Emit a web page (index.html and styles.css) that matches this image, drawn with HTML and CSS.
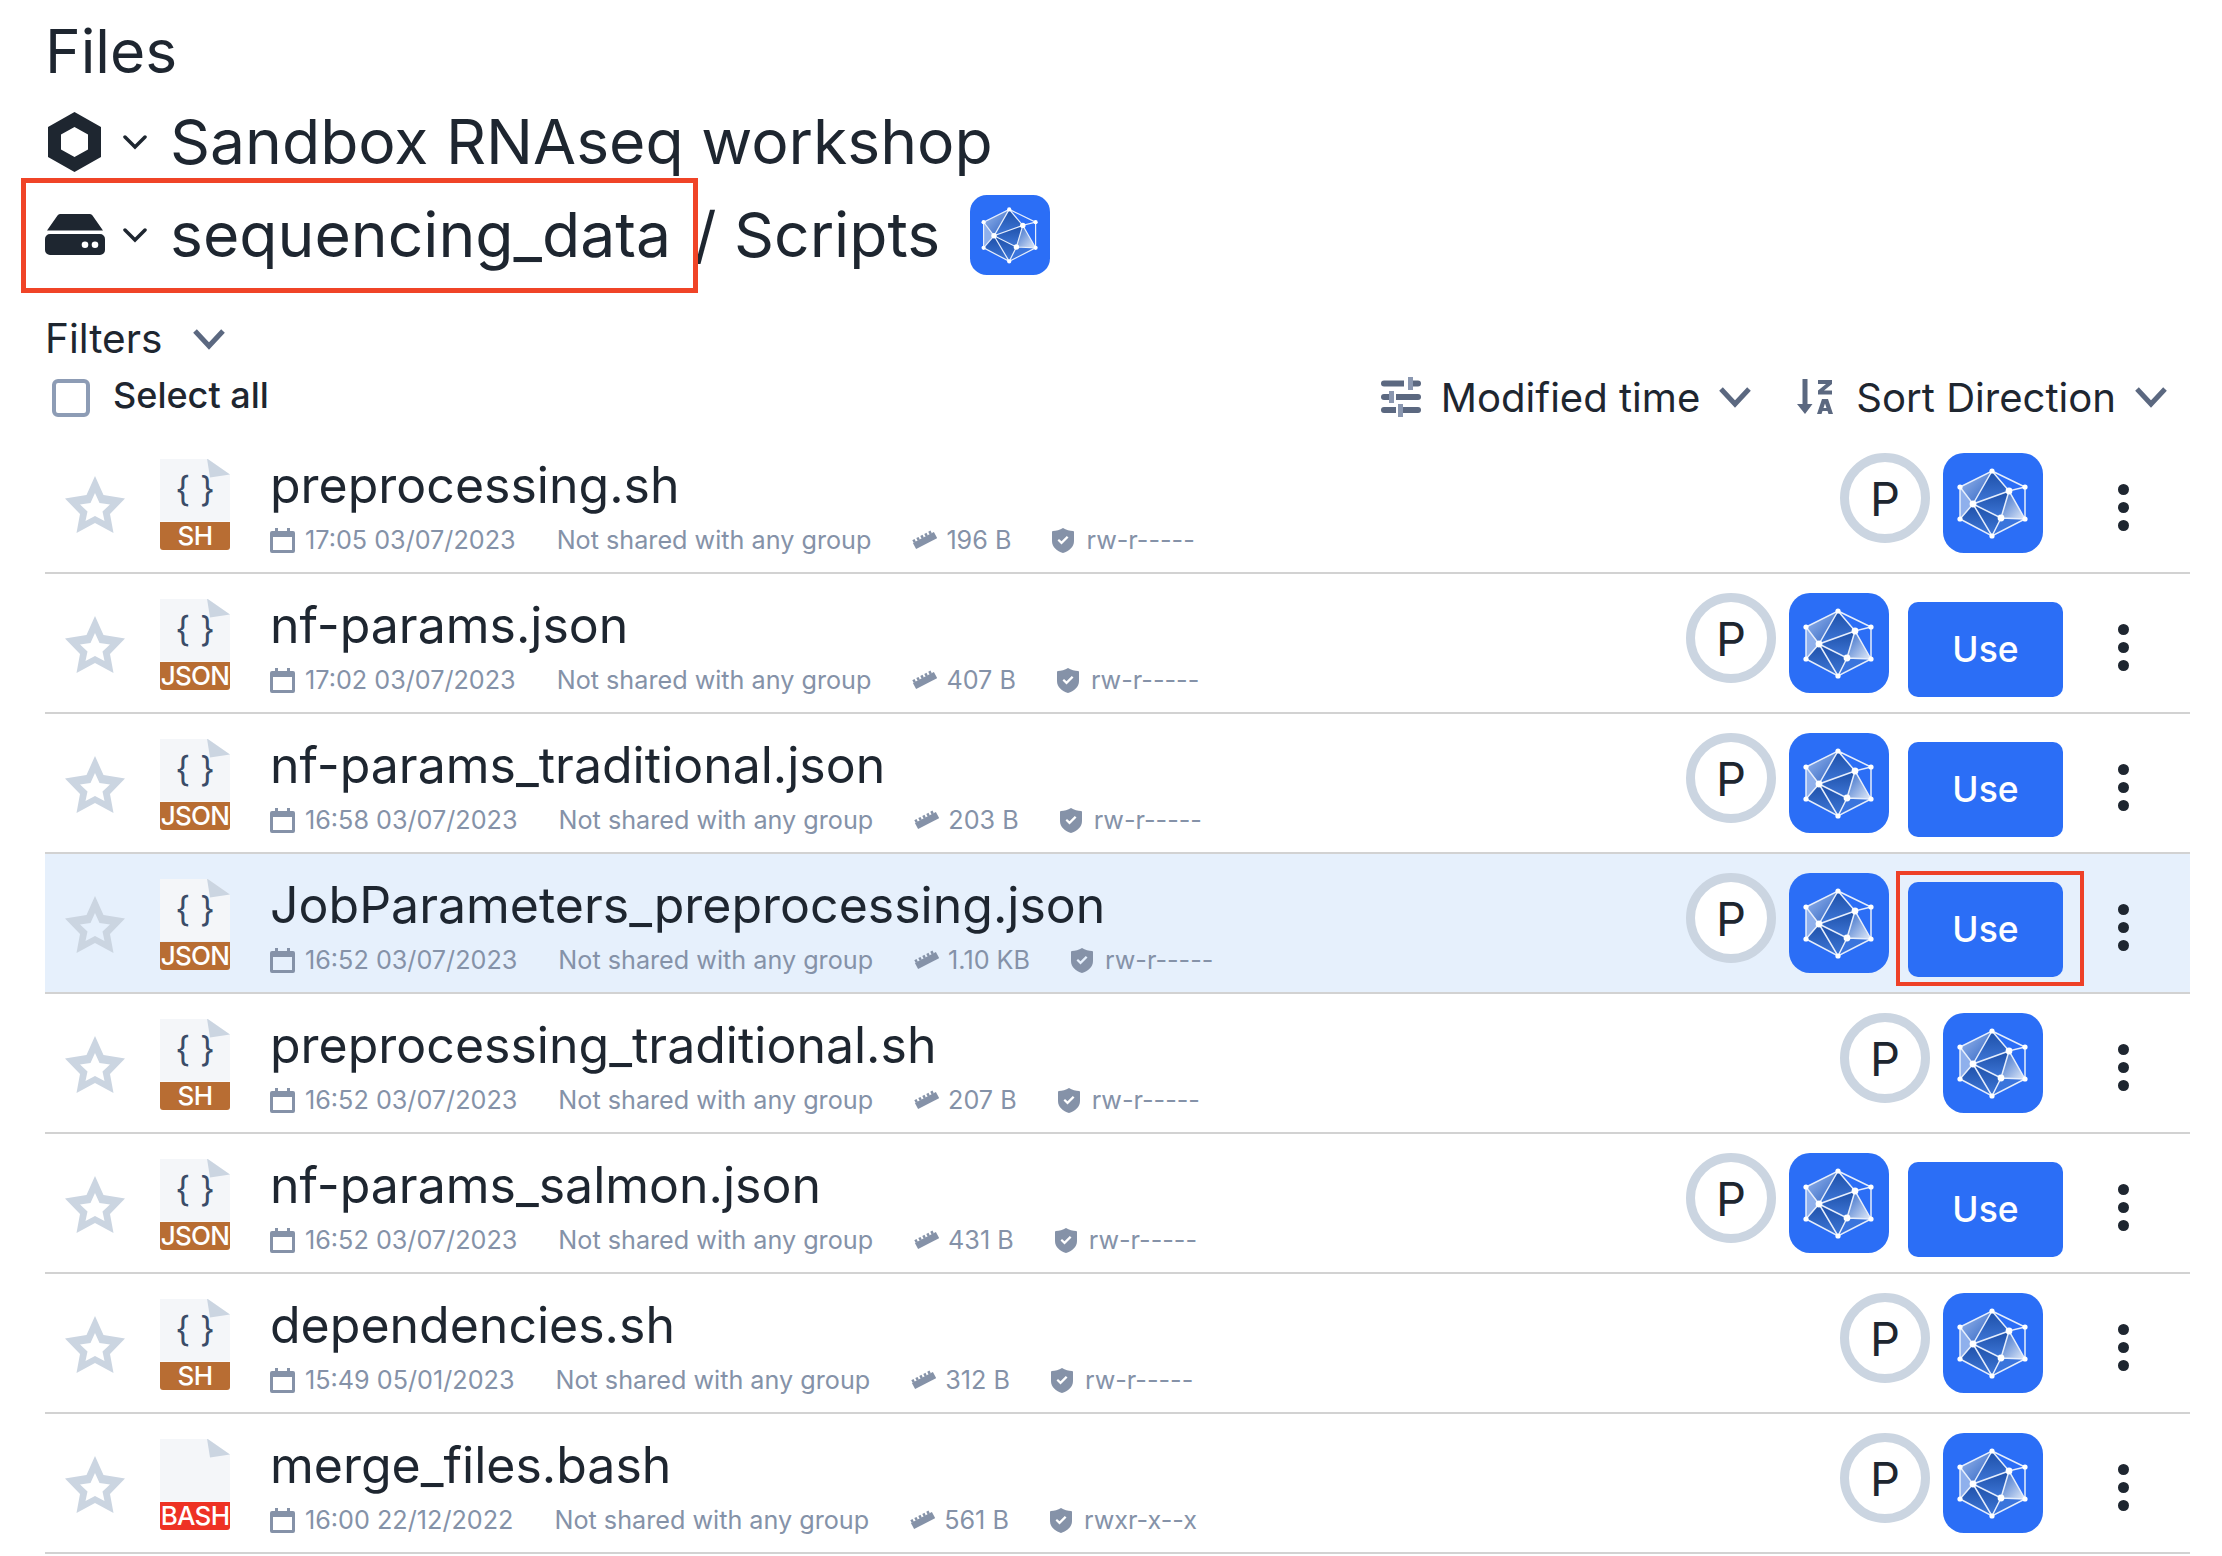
FILE: index.html

```html
<!DOCTYPE html>
<html lang="en">
<head>
    <meta charset="UTF-8">
    <title>Files</title>
    <link rel="stylesheet" href="styles.css">
</head>
<body>
    <svg class="sprite" xmlns="http://www.w3.org/2000/svg">
        <defs>
            <linearGradient id="facetA" x1="0" y1="0" x2="1" y2="1">
                <stop offset="0" stop-color="#9fbdf0"/>
                <stop offset="1" stop-color="#2a5fc0"/>
            </linearGradient>
            <linearGradient id="facetB" x1="0" y1="0" x2="0" y2="1">
                <stop offset="0" stop-color="#1d4fa8"/>
                <stop offset="1" stop-color="#3f78d8"/>
            </linearGradient>
            <linearGradient id="facetC" x1="0" y1="0" x2="1" y2="1">
                <stop offset="0" stop-color="#2a62c4"/>
                <stop offset="1" stop-color="#e4edfb"/>
            </linearGradient>
            <symbol id="tile" viewBox="0 0 100 100">
                <rect width="100" height="100" rx="21" fill="#2b6ef6"/>
                <path d="M49 18L17 34L30 51Z" fill="url(#facetA)"/>
                <path d="M17 34L30 51L17 66Z" fill="#8fb0ec"/>
                <path d="M49 18L66 38L30 51Z" fill="url(#facetB)"/>
                <path d="M30 51L66 38L58 65Z" fill="url(#facetB)"/>
                <path d="M66 38L82 66L58 65Z" fill="url(#facetC)"/>
                <path d="M30 51L58 65L49 83L17 66Z" fill="url(#facetB)"/>
                <path d="M58 65L82 66L49 83Z" fill="#3a74dc"/>
                <path d="M49 18L82 34V66L49 83L17 66V34ZM49 18L30 51L17 34M49 18L66 38L82 34M66 38L30 51L17 66M30 51L58 65L82 66M30 51L49 83L58 65L66 38L82 66" fill="none" stroke="#e6eefc" stroke-width="1.500"/>
                <g fill="#fff">
                    <circle cx="49" cy="18" r="2.600"/>
                    <circle cx="82" cy="34" r="2.600"/>
                    <circle cx="82" cy="66" r="2.600"/>
                    <circle cx="49" cy="83" r="2.600"/>
                    <circle cx="17" cy="66" r="2.600"/>
                    <circle cx="17" cy="34" r="2.600"/>
                    <circle cx="30" cy="51" r="3.400"/>
                    <circle cx="66" cy="38" r="3.400"/>
                    <circle cx="58" cy="65" r="3.400"/>
                </g>
            </symbol>
            <symbol id="star" viewBox="0 0 60 57">
                <path fill-rule="evenodd" fill="#cbd5e1" d="M30 0L38.500 19L60 22.500L45 38L48.500 57L30 47L11.500 57L15 38L0 22.500L21.500 19ZM30 17L25.500 27L15 28.500L22.500 35.500L20.500 45L30 40L39.500 45L37.500 35.500L45 28.500L34.500 27Z"/>
            </symbol>
            <symbol id="calendar" viewBox="0 0 25 25">
                <path fill-rule="evenodd" fill="currentColor" d="M2 3H5V0H8V3H17V0H20V3H23A2 2 0 0 1 25 5V23A2 2 0 0 1 23 25H2A2 2 0 0 1 0 23V5A2 2 0 0 1 2 3ZM3 9V22H22V9Z"/>
            </symbol>
            <symbol id="ruler" viewBox="0 0 25 20">
                <path d="M2.500 16L23.500 5" fill="none" stroke="currentColor" stroke-width="7"/>
                <path d="M1 11.500L20 1.500" fill="none" stroke="currentColor" stroke-width="3" stroke-dasharray="2.500 2"/>
            </symbol>
            <symbol id="shield" viewBox="0 0 22 25">
                <path fill="currentColor" fill-rule="evenodd" d="M11 0C14 2 18 3 21 3A1 1 0 0 1 22 4V13C22 19 17 23 11 25C5 23 0 19 0 13V4A1 1 0 0 1 1 3C4 3 8 2 11 0ZM5.500 12.500L9.500 16.500L16.500 9.500L14.800 8L9.500 13.300L7 11Z"/>
            </symbol>
            <symbol id="chevron" viewBox="0 0 34 22">
                <path d="M3 3L17 18L31 3" fill="none" stroke="currentColor" stroke-width="5"/>
            </symbol>
        </defs>
    </svg>

    <h1 class="title">Files</h1>

    <div class="crumbs">
        <svg class="crumb-icon" viewBox="0 0 53 60"><path fill-rule="evenodd" fill="#1e2630" d="M26.500 0L53 15V45L26.500 60L0 45V15ZM26.500 15L13 22.500V37.500L26.500 45L40 37.500V22.500Z"/></svg>
        <svg class="crumb-chevron" viewBox="0 0 24 16"><path d="M2 3L12 13L22 3" fill="none" stroke="#1e2630" stroke-width="3.500" stroke-linecap="round"/></svg>
        <span>Sandbox RNAseq workshop</span>
    </div>

    <div class="crumbs">
        <div class="crumb-mark">
            <svg class="crumb-icon disk" viewBox="0 0 60 41"><path fill-rule="evenodd" fill="#1e2630" d="M15 0H45A3 3 0 0 1 47.500 1.500L58 16.500H2L12.500 1.500A3 3 0 0 1 15 0ZM5 20H55A5 5 0 0 1 60 25V36A5 5 0 0 1 55 41H5A5 5 0 0 1 0 36V25A5 5 0 0 1 5 20ZM40 27.500A3.300 3.300 0 1 0 40 34.100A3.300 3.300 0 1 0 40 27.500ZM50 27.500A3.300 3.300 0 1 0 50 34.100A3.300 3.300 0 1 0 50 27.500Z"/></svg>
            <svg class="crumb-chevron" viewBox="0 0 24 16"><path d="M2 3L12 13L22 3" fill="none" stroke="#1e2630" stroke-width="3.500" stroke-linecap="round"/></svg>
            <span>sequencing_data</span>
        </div>
        <span class="crumb-sep">/ Scripts</span>
        <svg class="crumb-tile"><use href="#tile"/></svg>
    </div>

    <div class="filters">
        <span>Filters</span>
        <svg class="filters-chevron"><use href="#chevron"/></svg>
    </div>

    <div class="toolbar">
        <label class="select-all">
            <span class="checkbox"></span>
            <span>Select all</span>
        </label>
        <div class="sort">
            <svg class="sort-icon" viewBox="0 0 40 40">
                <g fill="#5b6880">
                    <path d="M3 3.500H23V9.500H3A3 3 0 0 1 3 3.500Z"/>
                    <path d="M32 3.500H37A3 3 0 0 1 37 9.500H32Z"/>
                    <path d="M3 17H8V23H3A3 3 0 0 1 3 17Z"/>
                    <path d="M15 17H37A3 3 0 0 1 37 23H15Z"/>
                    <path d="M3 30H15V36H3A3 3 0 0 1 3 30Z"/>
                    <path d="M22 30H37A3 3 0 0 1 37 36H22Z"/>
                </g>
                <g fill="#8a97b0">
                    <rect x="27" y="0" width="5" height="13"/>
                    <rect x="8" y="14" width="5" height="12"/>
                    <rect x="17" y="27" width="5" height="13"/>
                </g>
            </svg>
            <span class="sort-label">Modified time</span>
            <svg class="sort-chevron"><use href="#chevron"/></svg>
            <svg class="sort-icon az" viewBox="0 0 36 36">
                <path fill="#5b6880" d="M5.500 0H10.500V25H15.500L8 35L0 25H5.500Z"/>
                <path fill="#5b6880" d="M21 1H35V5L27 11.500H35V15.500H21V11.500L29 5H21Z"/>
                <path fill="#5b6880" fill-rule="evenodd" d="M25 20H31L36 35H31.500L30.500 32H25.500L24.500 35H20ZM28 24.500L26.500 29H29.500Z"/>
            </svg>
            <span class="sort-label">Sort Direction</span>
            <svg class="sort-chevron"><use href="#chevron"/></svg>
        </div>
    </div>

    <ul class="files">
        <li class="file no-use">
            <svg class="star"><use href="#star"/></svg>
            <div class="doc">
                <div class="doc-page"><span>{ }</span></div>
                <div class="doc-fold"></div>
                <div class="doc-type">SH</div>
            </div>
            <div class="info">
                <div class="name">preprocessing.sh</div>
                <div class="meta">
                    <span class="meta-item"><svg class="i-cal"><use href="#calendar"/></svg>17:05 03/07/2023</span>
                    <span class="meta-item">Not shared with any group</span>
                    <span class="meta-item"><svg class="i-ruler"><use href="#ruler"/></svg>196 B</span>
                    <span class="meta-item"><svg class="i-shield"><use href="#shield"/></svg>rw-r-----</span>
                </div>
            </div>
            <div class="actions">
                <span class="avatar">P</span>
                <svg class="tile"><use href="#tile"/></svg>
            </div>
            <div class="menu"><i></i><i></i><i></i></div>
        </li>
        <li class="file">
            <svg class="star"><use href="#star"/></svg>
            <div class="doc">
                <div class="doc-page"><span>{ }</span></div>
                <div class="doc-fold"></div>
                <div class="doc-type">JSON</div>
            </div>
            <div class="info">
                <div class="name">nf-params.json</div>
                <div class="meta">
                    <span class="meta-item"><svg class="i-cal"><use href="#calendar"/></svg>17:02 03/07/2023</span>
                    <span class="meta-item">Not shared with any group</span>
                    <span class="meta-item"><svg class="i-ruler"><use href="#ruler"/></svg>407 B</span>
                    <span class="meta-item"><svg class="i-shield"><use href="#shield"/></svg>rw-r-----</span>
                </div>
            </div>
            <div class="actions">
                <span class="avatar">P</span>
                <svg class="tile"><use href="#tile"/></svg>
                <button class="use">Use</button>
            </div>
            <div class="menu"><i></i><i></i><i></i></div>
        </li>
        <li class="file">
            <svg class="star"><use href="#star"/></svg>
            <div class="doc">
                <div class="doc-page"><span>{ }</span></div>
                <div class="doc-fold"></div>
                <div class="doc-type">JSON</div>
            </div>
            <div class="info">
                <div class="name">nf-params_traditional.json</div>
                <div class="meta">
                    <span class="meta-item"><svg class="i-cal"><use href="#calendar"/></svg>16:58 03/07/2023</span>
                    <span class="meta-item">Not shared with any group</span>
                    <span class="meta-item"><svg class="i-ruler"><use href="#ruler"/></svg>203 B</span>
                    <span class="meta-item"><svg class="i-shield"><use href="#shield"/></svg>rw-r-----</span>
                </div>
            </div>
            <div class="actions">
                <span class="avatar">P</span>
                <svg class="tile"><use href="#tile"/></svg>
                <button class="use">Use</button>
            </div>
            <div class="menu"><i></i><i></i><i></i></div>
        </li>
        <li class="file selected">
            <svg class="star"><use href="#star"/></svg>
            <div class="doc">
                <div class="doc-page"><span>{ }</span></div>
                <div class="doc-fold"></div>
                <div class="doc-type">JSON</div>
            </div>
            <div class="info">
                <div class="name">JobParameters_preprocessing.json</div>
                <div class="meta">
                    <span class="meta-item"><svg class="i-cal"><use href="#calendar"/></svg>16:52 03/07/2023</span>
                    <span class="meta-item">Not shared with any group</span>
                    <span class="meta-item"><svg class="i-ruler"><use href="#ruler"/></svg>1.10 KB</span>
                    <span class="meta-item"><svg class="i-shield"><use href="#shield"/></svg>rw-r-----</span>
                </div>
            </div>
            <div class="actions">
                <span class="avatar">P</span>
                <svg class="tile"><use href="#tile"/></svg>
                <button class="use marked">Use</button>
            </div>
            <div class="menu"><i></i><i></i><i></i></div>
        </li>
        <li class="file no-use">
            <svg class="star"><use href="#star"/></svg>
            <div class="doc">
                <div class="doc-page"><span>{ }</span></div>
                <div class="doc-fold"></div>
                <div class="doc-type">SH</div>
            </div>
            <div class="info">
                <div class="name">preprocessing_traditional.sh</div>
                <div class="meta">
                    <span class="meta-item"><svg class="i-cal"><use href="#calendar"/></svg>16:52 03/07/2023</span>
                    <span class="meta-item">Not shared with any group</span>
                    <span class="meta-item"><svg class="i-ruler"><use href="#ruler"/></svg>207 B</span>
                    <span class="meta-item"><svg class="i-shield"><use href="#shield"/></svg>rw-r-----</span>
                </div>
            </div>
            <div class="actions">
                <span class="avatar">P</span>
                <svg class="tile"><use href="#tile"/></svg>
            </div>
            <div class="menu"><i></i><i></i><i></i></div>
        </li>
        <li class="file">
            <svg class="star"><use href="#star"/></svg>
            <div class="doc">
                <div class="doc-page"><span>{ }</span></div>
                <div class="doc-fold"></div>
                <div class="doc-type">JSON</div>
            </div>
            <div class="info">
                <div class="name">nf-params_salmon.json</div>
                <div class="meta">
                    <span class="meta-item"><svg class="i-cal"><use href="#calendar"/></svg>16:52 03/07/2023</span>
                    <span class="meta-item">Not shared with any group</span>
                    <span class="meta-item"><svg class="i-ruler"><use href="#ruler"/></svg>431 B</span>
                    <span class="meta-item"><svg class="i-shield"><use href="#shield"/></svg>rw-r-----</span>
                </div>
            </div>
            <div class="actions">
                <span class="avatar">P</span>
                <svg class="tile"><use href="#tile"/></svg>
                <button class="use">Use</button>
            </div>
            <div class="menu"><i></i><i></i><i></i></div>
        </li>
        <li class="file no-use">
            <svg class="star"><use href="#star"/></svg>
            <div class="doc">
                <div class="doc-page"><span>{ }</span></div>
                <div class="doc-fold"></div>
                <div class="doc-type">SH</div>
            </div>
            <div class="info">
                <div class="name">dependencies.sh</div>
                <div class="meta">
                    <span class="meta-item"><svg class="i-cal"><use href="#calendar"/></svg>15:49 05/01/2023</span>
                    <span class="meta-item">Not shared with any group</span>
                    <span class="meta-item"><svg class="i-ruler"><use href="#ruler"/></svg>312 B</span>
                    <span class="meta-item"><svg class="i-shield"><use href="#shield"/></svg>rw-r-----</span>
                </div>
            </div>
            <div class="actions">
                <span class="avatar">P</span>
                <svg class="tile"><use href="#tile"/></svg>
            </div>
            <div class="menu"><i></i><i></i><i></i></div>
        </li>
        <li class="file no-use">
            <svg class="star"><use href="#star"/></svg>
            <div class="doc">
                <div class="doc-page"></div>
                <div class="doc-fold"></div>
                <div class="doc-type bash">BASH</div>
            </div>
            <div class="info">
                <div class="name">merge_files.bash</div>
                <div class="meta">
                    <span class="meta-item"><svg class="i-cal"><use href="#calendar"/></svg>16:00 22/12/2022</span>
                    <span class="meta-item">Not shared with any group</span>
                    <span class="meta-item"><svg class="i-ruler"><use href="#ruler"/></svg>561 B</span>
                    <span class="meta-item"><svg class="i-shield"><use href="#shield"/></svg>rwxr-x--x</span>
                </div>
            </div>
            <div class="actions">
                <span class="avatar">P</span>
                <svg class="tile"><use href="#tile"/></svg>
            </div>
            <div class="menu"><i></i><i></i><i></i></div>
        </li>
    </ul>
</body>
</html>
```

FILE: styles.css

```css
* { box-sizing: border-box; }
body { margin: 0; padding: 0 32px 0 45px; background: #fff; color: #1e2630; font-family: Inter, sans-serif; }
.sprite { display: block; width: 0; height: 0; }

.title { margin: 0; height: 95px; padding-top: 16px; font-size: 60.500px; line-height: 70px; font-weight: 400; }

.crumbs { display: flex; align-items: center; height: 93px; font-size: 62.400px; }
.crumb-icon { width: 53px; height: 60px; margin-left: 3px; flex: none; }
.crumb-icon.disk { width: 60px; height: 41px; margin-left: 0; }
.crumb-chevron { width: 24px; height: 16px; margin: 0 23px 0 22px; flex: none; }
.disk + .crumb-chevron { margin-left: 18px; }
.crumb-mark { position: relative; display: flex; align-items: center; height: 93px; }
.crumb-mark::after { content: ""; position: absolute; left: -24px; right: -27px; top: -10px; bottom: -12px; border: 5px solid #f04427; }
.crumb-sep { margin-left: 23px; }
.crumb-tile { width: 80px; height: 80px; margin-left: 30px; }

.filters { display: flex; align-items: center; height: 51px; margin-top: 32px; font-size: 40.600px; }
.filters-chevron { width: 34px; height: 22px; margin-left: 30px; color: #5b6880; }

.toolbar { display: flex; align-items: center; justify-content: space-between; height: 62px; }
.select-all { display: flex; align-items: center; font-size: 36px; font-weight: 500; }
.checkbox { width: 38px; height: 38px; margin: 6px 23px 0 7px; border: 4px solid #8d9cb5; border-radius: 6px; }
.sort { display: flex; align-items: center; padding: 4px 22px 0 0; font-size: 40.100px; }
.sort-icon { width: 40px; height: 40px; margin-right: 20px; }
.sort-icon.az { width: 36px; height: 36px; margin-right: 23px; }
.sort-chevron { width: 34px; height: 22px; margin-left: 18px; color: #5b6880; }
.sort-chevron:not(:last-child) { margin-right: 45px; }

.files { list-style: none; margin: 8px 0 0; padding: 0; }
.file { display: flex; align-items: center; height: 140px; border-bottom: 2px solid #d2d2d2; }
.file.selected { background: #e6f0fc; }
.star { width: 60px; height: 57px; margin: 2px 0 0 20px; flex: none; }
.doc { position: relative; width: 70px; height: 91px; margin: 2px 0 0 35px; flex: none; }
.doc-page { display: flex; align-items: center; justify-content: center; height: 63px; padding-bottom: 3px; background: #f4f6f9; clip-path: polygon(0 0, 47px 0, 70px 16px, 70px 63px, 0 63px); color: #3a4c68; font-size: 35px; }
.doc-fold { position: absolute; right: 0; top: 0; width: 23px; height: 19px; background: #cbd5e1; clip-path: polygon(0 0, 100% 16px, 3px 100%); }
.doc-type { height: 28px; display: flex; justify-content: center; border-radius: 0 0 3px 3px; background: #b86d33; color: #fff; font-size: 26px; font-weight: 500; line-height: 28px; letter-spacing: -0.700px; }
.doc-type.bash { background: #ee3224; }

.info { flex: 1; min-width: 0; margin: 12px 0 0 40px; }
.name { font-size: 50px; line-height: 58px; margin-top: -6px; }
.meta { display: flex; align-items: center; gap: 41px; height: 32px; margin-top: 10px; color: #8592a8; font-size: 25.200px; }
.meta-item { display: flex; align-items: center; white-space: nowrap; }
.i-cal { width: 25px; height: 25px; margin-right: 10px; }
.i-ruler { width: 25px; height: 20px; margin-right: 9px; }
.i-shield { width: 22px; height: 25px; margin-right: 12px; }

.actions { display: flex; align-items: flex-start; gap: 12px; align-self: flex-start; margin-top: 19px; }
.avatar { display: flex; align-items: center; justify-content: center; width: 90px; height: 90px; margin-right: 1px; border: 9px solid #cbd5e1; border-radius: 50%; font-size: 47px; background: #fff; }
.tile { width: 100px; height: 100px; }
.use { position: relative; width: 155px; height: 95px; margin: 9px 0 0 7px; padding: 0; border: 0; border-radius: 10px; background: #2b6ef6; color: #fff; font-family: inherit; font-size: 35.500px; font-weight: 500; }
.use.marked::after { content: ""; position: absolute; left: -12px; right: -21px; top: -11px; bottom: -9px; border: 4px solid #ee4027; }
.no-use .actions { padding-right: 20px; }

.menu { display: flex; flex-direction: column; align-items: center; gap: 7px; width: 127px; padding-right: 7px; margin-top: 8px; }
.menu i { display: block; width: 11px; height: 11px; border-radius: 50%; background: #1e2630; }
```
